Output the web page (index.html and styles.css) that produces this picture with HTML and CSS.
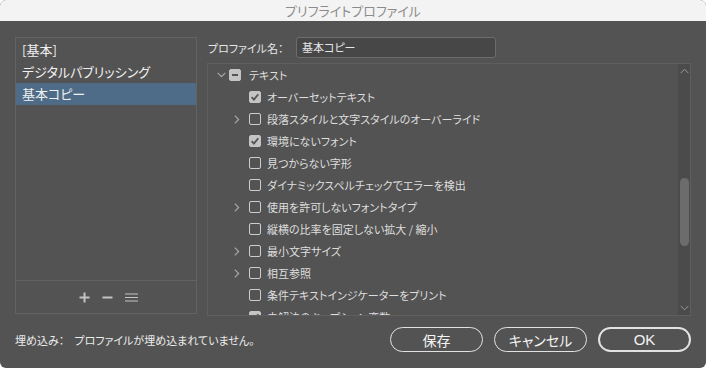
FILE: index.html
```html
<!DOCTYPE html>
<html lang="ja">
<head>
  <meta charset="UTF-8" />
  <title>プリフライトプロファイル</title>
  <link rel="stylesheet" href="styles.css">
</head>
<body>
  <div class="window">
    <div class="titlebar">プリフライトプロファイル</div>

    <div class="main">
      <div class="profiles">
        <ul class="profile-list">
          <li>[基本]</li>
          <li>デジタルパブリッシング</li>
          <li class="selected">基本コピー</li>
        </ul>
        <div class="profile-tools">
          <svg width="11" height="11" viewBox="0 0 11 11"><path d="M5.5 0.5v10M0.5 5.5h10" stroke="#c4c4c4" stroke-width="2"/></svg>
          <svg width="11" height="11" viewBox="0 0 11 11"><path d="M0.5 5.5h10" stroke="#c4c4c4" stroke-width="2"/></svg>
          <svg width="13" height="11" viewBox="0 0 13 11"><path d="M0 2h13M0 5.5h13M0 9h13" stroke="#c4c4c4" stroke-width="1.2"/></svg>
        </div>
      </div>

      <div class="editor">
        <div class="name-row">
          <label class="name-label">プロファイル名：</label>
          <div class="name-input">基本コピー</div>
        </div>

        <div class="tree">
          <div class="tree-rows">
            <div class="row lv1">
              <span class="chev"><svg width="9" height="6" viewBox="0 0 9 6"><path d="M0.7 0.8l3.8 3.8 3.8-3.8" fill="none" stroke="#a8a8a8" stroke-width="1.2"/></svg></span>
              <span class="cb mixed"></span>
              <span class="label">テキスト</span>
            </div>
            <div class="row lv2">
              <span class="chev"></span>
              <span class="cb checked"><svg width="12" height="12" viewBox="0 0 12 12"><path d="M2.6 6.2l2.3 2.4 4.4-5.4" fill="none" stroke="#555" stroke-width="1.8"/></svg></span>
              <span class="label">オーバーセットテキスト</span>
            </div>
            <div class="row lv2">
              <span class="chev"><svg width="6" height="9" viewBox="0 0 6 9"><path d="M0.8 0.7l3.8 3.8-3.8 3.8" fill="none" stroke="#a8a8a8" stroke-width="1.2"/></svg></span>
              <span class="cb"></span>
              <span class="label">段落スタイルと文字スタイルのオーバーライド</span>
            </div>
            <div class="row lv2">
              <span class="chev"></span>
              <span class="cb checked"><svg width="12" height="12" viewBox="0 0 12 12"><path d="M2.6 6.2l2.3 2.4 4.4-5.4" fill="none" stroke="#555" stroke-width="1.8"/></svg></span>
              <span class="label">環境にないフォント</span>
            </div>
            <div class="row lv2">
              <span class="chev"></span>
              <span class="cb"></span>
              <span class="label">見つからない字形</span>
            </div>
            <div class="row lv2">
              <span class="chev"></span>
              <span class="cb"></span>
              <span class="label">ダイナミックスペルチェックでエラーを検出</span>
            </div>
            <div class="row lv2">
              <span class="chev"><svg width="6" height="9" viewBox="0 0 6 9"><path d="M0.8 0.7l3.8 3.8-3.8 3.8" fill="none" stroke="#a8a8a8" stroke-width="1.2"/></svg></span>
              <span class="cb"></span>
              <span class="label">使用を許可しないフォントタイプ</span>
            </div>
            <div class="row lv2">
              <span class="chev"></span>
              <span class="cb"></span>
              <span class="label">縦横の比率を固定しない拡大 / 縮小</span>
            </div>
            <div class="row lv2">
              <span class="chev"><svg width="6" height="9" viewBox="0 0 6 9"><path d="M0.8 0.7l3.8 3.8-3.8 3.8" fill="none" stroke="#a8a8a8" stroke-width="1.2"/></svg></span>
              <span class="cb"></span>
              <span class="label">最小文字サイズ</span>
            </div>
            <div class="row lv2">
              <span class="chev"><svg width="6" height="9" viewBox="0 0 6 9"><path d="M0.8 0.7l3.8 3.8-3.8 3.8" fill="none" stroke="#a8a8a8" stroke-width="1.2"/></svg></span>
              <span class="cb"></span>
              <span class="label">相互参照</span>
            </div>
            <div class="row lv2">
              <span class="chev"></span>
              <span class="cb"></span>
              <span class="label">条件テキストインジケーターをプリント</span>
            </div>
            <div class="row lv2">
              <span class="chev"></span>
              <span class="cb checked"><svg width="12" height="12" viewBox="0 0 12 12"><path d="M2.6 6.2l2.3 2.4 4.4-5.4" fill="none" stroke="#555" stroke-width="1.8"/></svg></span>
              <span class="label">未解決のキャプション変数</span>
            </div>
          </div>

          <div class="scrollbar">
            <svg class="arrow" width="9" height="6" viewBox="0 0 9 6"><path d="M0.7 5l3.8-3.8 3.8 3.8" fill="none" stroke="#9a9a9a" stroke-width="1"/></svg>
            <div class="thumb"></div>
            <svg class="arrow down" width="9" height="6" viewBox="0 0 9 6"><path d="M0.7 1l3.8 3.8 3.8-3.8" fill="none" stroke="#9a9a9a" stroke-width="1"/></svg>
          </div>
        </div>
      </div>
    </div>

    <div class="bottom">
      <div class="embed">
        <span class="embed-label">埋め込み：</span>
        <span>プロファイルが埋め込まれていません。</span>
      </div>
      <div class="buttons">
        <button class="btn">保存</button>
        <button class="btn">キャンセル</button>
        <button class="btn ok">OK</button>
      </div>
    </div>
  </div>
</body>
</html>
```

FILE: styles.css
```css
html, body {
  margin: 0;
  padding: 0;
  background: #fff;
}

body {
  font-family: "Noto Sans CJK JP", "Noto Sans", sans-serif;
  font-feature-settings: "palt";
  color: #dedede;
}

.window {
  width: 706px;
  height: 368px;
  background: #535353;
  border-radius: 6px;
  overflow: hidden;
  display: flex;
  flex-direction: column;
}

.titlebar {
  height: 21px;
  flex: 0 0 21px;
  background: #f3f3f3;
  color: #8c8c8c;
  font-size: 13px;
  line-height: 21px;
  text-align: center;
}

.main {
  display: flex;
  gap: 10px;
  padding: 16px 15px 0 15px;
}

/* left: profile list */
.profiles {
  width: 182px;
  height: 277px;
  box-sizing: border-box;
  border: 1px solid #636363;
  display: flex;
  flex-direction: column;
}

.profile-list {
  list-style: none;
  margin: 0;
  padding: 1px 0 0 0;
  flex: 1;
}

.profile-list li {
  height: 22px;
  line-height: 22px;
  padding-left: 6px;
  font-size: 13px;
  color: #f0f0f0;
}

.profile-list li.selected {
  background: #4e6c87;
}

.profile-tools {
  height: 32px;
  border-top: 1px solid #636363;
  display: flex;
  align-items: center;
  justify-content: center;
  gap: 12px;
  padding-left: 4px;
}

/* right: editor */
.editor {
  flex: 1;
  display: flex;
  flex-direction: column;
}

.name-row {
  display: flex;
  align-items: center;
  height: 21px;
}

.name-label {
  font-size: 11px;
  width: 88px;
  padding-left: 1px;
  color: #e6e6e6;
}

.name-input {
  width: 200px;
  height: 21px;
  box-sizing: border-box;
  border: 1px solid #6c6c6c;
  border-radius: 3px;
  background: #474747;
  font-size: 11px;
  line-height: 19px;
  padding-left: 5px;
  color: #e6e6e6;
}

.tree {
  margin-top: 5px;
  height: 253px;
  box-sizing: border-box;
  border: 1px solid #5f5f5f;
  display: flex;
  overflow: hidden;
}

.tree-rows {
  flex: 1;
  overflow: hidden;
}

.row {
  height: 22px;
  display: flex;
  align-items: center;
  font-size: 11px;
  white-space: nowrap;
}

.chev {
  width: 12px;
  height: 12px;
  display: flex;
  align-items: center;
  justify-content: center;
}

.cb {
  width: 12px;
  height: 12px;
  box-sizing: border-box;
  border: 1px solid #cdcdcd;
  border-radius: 2px;
  display: flex;
  align-items: center;
  justify-content: center;
}

.cb svg {
  margin: -1px;
}

.cb.checked {
  background: #c4c4c4;
  border-color: #c4c4c4;
}

.cb.mixed {
  background: #c4c4c4;
  border-color: #c4c4c4;
}

.cb.mixed::after {
  content: "";
  width: 6px;
  height: 2px;
  background: #555;
}

.lv1 {
  padding-left: 7px;
}

.lv1 .cb {
  margin-left: 2px;
}

.lv1 .label {
  margin-left: 8px;
}

.lv2 {
  padding-left: 23px;
}

.lv2 .cb {
  margin-left: 6px;
}

.lv2 .label {
  margin-left: 6px;
}

.scrollbar {
  width: 12px;
  background: #4b4b4b;
  display: flex;
  flex-direction: column;
  align-items: center;
}

.arrow {
  margin-top: 4px;
}

.thumb {
  width: 9px;
  height: 68px;
  margin-top: 104px;
  border-radius: 5px;
  background: #6c6c6c;
}

.arrow.down {
  margin-top: auto;
  margin-bottom: 4px;
}

/* bottom bar */
.bottom {
  display: flex;
  align-items: center;
  justify-content: space-between;
  padding: 11px 15px 0 15px;
}

.embed {
  font-size: 11px;
  color: #ececec;
}

.embed-label {
  display: inline-block;
  width: 57px;
}

.buttons {
  display: flex;
  gap: 11px;
}

.btn {
  width: 93px;
  height: 25px;
  border: 1.5px solid #e2e2e2;
  border-radius: 13px;
  background: transparent;
  color: #f4f4f4;
  font-family: "Noto Sans CJK JP", "Noto Sans", sans-serif;
  font-feature-settings: "palt";
  font-size: 14px;
  padding: 0;
  line-height: 20px;
}

.btn.ok {
  border-width: 2px;
  font-family: "Liberation Sans", "Noto Sans CJK JP", sans-serif;
  font-size: 15px;
}
```
